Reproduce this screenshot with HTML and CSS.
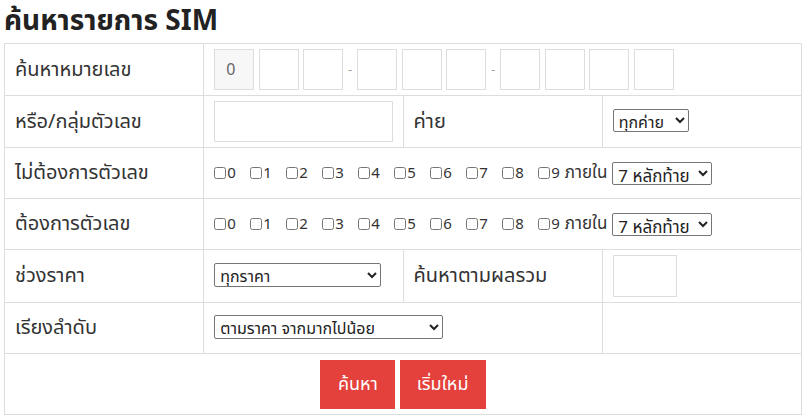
FILE: index.html
```html
<!DOCTYPE html>
<html lang="th">
<head>
    <meta charset="UTF-8">
    <meta name="viewport" content="width=device-width, initial-scale=1.0">
    <title>ค้นหารายการ SIM</title>
    <link rel="stylesheet" href="styles.css">
</head>
<body>
    <h1 class="title">ค้นหารายการ SIM</h1>

    <table class="search">
        <colgroup>
            <col class="col">
            <col class="col">
            <col class="col">
            <col class="col">
        </colgroup>
        <tr>
            <td class="label">ค้นหาหมายเลข</td>
            <td colspan="3">
                <div class="digits">
                    <input type="text" class="digit first" value="0" readonly>
                    <input type="text" class="digit">
                    <input type="text" class="digit">
                    <span class="dash">-</span>
                    <input type="text" class="digit">
                    <input type="text" class="digit">
                    <input type="text" class="digit">
                    <span class="dash">-</span>
                    <input type="text" class="digit">
                    <input type="text" class="digit">
                    <input type="text" class="digit">
                    <input type="text" class="digit">
                </div>
            </td>
        </tr>
        <tr>
            <td class="label">หรือ/กลุ่มตัวเลข</td>
            <td><input type="text" class="group-input"></td>
            <td class="label">ค่าย</td>
            <td>
                <select class="sel sel-network">
                    <option>ทุกค่าย</option>
                </select>
            </td>
        </tr>
        <tr>
            <td class="label">ไม่ต้องการตัวเลข</td>
            <td colspan="3">
                <div class="checks">
                    <label class="chk"><input type="checkbox">0</label>
                    <label class="chk"><input type="checkbox">1</label>
                    <label class="chk"><input type="checkbox">2</label>
                    <label class="chk"><input type="checkbox">3</label>
                    <label class="chk"><input type="checkbox">4</label>
                    <label class="chk"><input type="checkbox">5</label>
                    <label class="chk"><input type="checkbox">6</label>
                    <label class="chk"><input type="checkbox">7</label>
                    <label class="chk"><input type="checkbox">8</label>
                    <label class="chk last"><input type="checkbox">9</label>
                    <span class="within">ภายใน</span>
                    <select class="sel sel-digits">
                        <option>7 หลักท้าย</option>
                    </select>
                </div>
            </td>
        </tr>
        <tr>
            <td class="label">ต้องการตัวเลข</td>
            <td colspan="3">
                <div class="checks">
                    <label class="chk"><input type="checkbox">0</label>
                    <label class="chk"><input type="checkbox">1</label>
                    <label class="chk"><input type="checkbox">2</label>
                    <label class="chk"><input type="checkbox">3</label>
                    <label class="chk"><input type="checkbox">4</label>
                    <label class="chk"><input type="checkbox">5</label>
                    <label class="chk"><input type="checkbox">6</label>
                    <label class="chk"><input type="checkbox">7</label>
                    <label class="chk"><input type="checkbox">8</label>
                    <label class="chk last"><input type="checkbox">9</label>
                    <span class="within">ภายใน</span>
                    <select class="sel sel-digits">
                        <option>7 หลักท้าย</option>
                    </select>
                </div>
            </td>
        </tr>
        <tr>
            <td class="label">ช่วงราคา</td>
            <td>
                <select class="sel sel-price">
                    <option>ทุกราคา</option>
                </select>
            </td>
            <td class="label">ค้นหาตามผลรวม</td>
            <td><input type="text" class="sum-input"></td>
        </tr>
        <tr>
            <td class="label">เรียงลำดับ</td>
            <td colspan="2">
                <select class="sel sel-sort">
                    <option>ตามราคา จากมากไปน้อย</option>
                </select>
            </td>
            <td></td>
        </tr>
        <tr>
            <td colspan="4" class="actions">
                <button class="btn btn-search">ค้นหา</button>
                <button class="btn btn-reset">เริ่มใหม่</button>
            </td>
        </tr>
    </table>
</body>
</html>
```

FILE: styles.css
```css
* {
    box-sizing: border-box;
}

body {
    margin: 0;
    padding: 0 4px;
    font-family: "Noto Sans Thai", "Noto Sans", sans-serif;
    color: #333;
    background: #fff;
}

.title {
    margin: 0 0 0;
    font-size: 28px;
    font-weight: bold;
    color: #222;
    line-height: normal;
}

.search {
    width: 798px;
    border-collapse: collapse;
    table-layout: fixed;
}

.search .col {
    width: 25%;
}

.search td {
    border: 1px solid #ddd;
    padding: 5px 10px;
    vertical-align: middle;
    height: 51px;
}

.search .label {
    font-size: 20px;
    line-height: 28px;
    white-space: nowrap;
}

/* phone number boxes */
.digits {
    display: flex;
    align-items: center;
    gap: 4.5px;
}

.digit {
    width: 40px;
    height: 41px;
    border: 1px solid #ddd;
    padding: 0 11px;
    font-family: inherit;
    font-size: 16px;
    color: #666;
    outline: none;
}

.digit.first {
    background: #f7f7f7;
}

.dash {
    width: 5px;
    text-align: center;
    font-size: 12px;
    color: #999;
}

.group-input {
    display: block;
    width: 100%;
    height: 41px;
    border: 1px solid #ddd;
}

.sum-input {
    display: block;
    width: 64px;
    height: 42px;
    border: 1px solid #ddd;
}

/* selects */
.sel {
    height: 24px;
    font-family: inherit;
    font-size: 16px;
    line-height: 20px;
    color: #222;
    border: 1px solid #767676;
    border-radius: 2px;
    background: #fff;
    padding: 0 1px;
}

.sel-network {
    width: 76px;
    height: 23px;
}

.sel-digits {
    width: 100px;
    height: 23px;
    font-size: 17px;
}

.sel-price {
    width: 167px;
}

.sel-sort {
    width: 229px;
}

/* checkbox rows */
.checks {
    display: flex;
    align-items: center;
    font-size: 15px;
    color: #333;
}

.chk {
    display: flex;
    align-items: center;
    width: 36px;
}

.chk.last {
    width: auto;
    margin-right: 5px;
}

.chk input {
    margin: 0 1px 0 0;
    width: 12px;
    height: 12px;
}

.within {
    font-size: 17px;
    margin-right: 5px;
}

/* buttons */
.search .actions {
    text-align: center;
    height: 61px;
    padding: 5px 10px;
}

.btn {
    height: 49px;
    border: none;
    background: #e4403c;
    color: #fff;
    font-family: inherit;
    font-size: 18px;
    padding: 0;
    cursor: pointer;
}

.btn-search {
    width: 75px;
}

.btn-reset {
    width: 86px;
}
```
